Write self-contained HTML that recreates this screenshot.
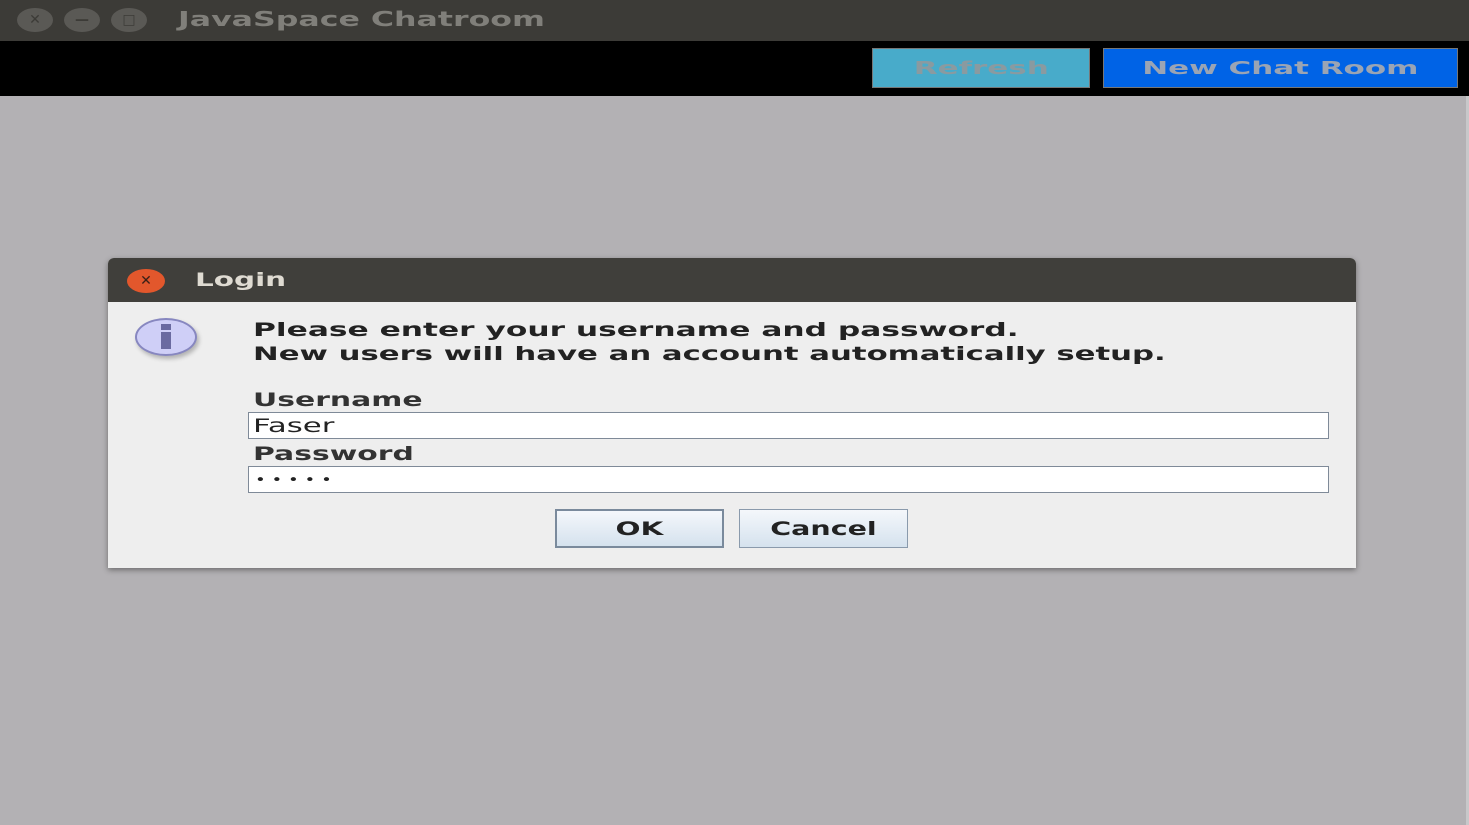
<!DOCTYPE html>
<html><head><style>
body{margin:0;width:1469px;height:825px;overflow:hidden;background:#b3b1b4;font-family:"DejaVu Sans","Liberation Sans",sans-serif;font-weight:bold;position:relative}
.a{position:absolute}
.s{display:inline-block;transform:scaleX(1.62);transform-origin:left center;white-space:nowrap}
.c{transform-origin:center center}
.circ{position:absolute;top:8px;width:36px;height:24px;border-radius:50%;background:#5a5955;color:#3c3b37;font-size:14px;text-align:center;line-height:24px}
.btn{position:absolute;box-sizing:border-box;text-align:center}
.field{position:absolute;left:248px;width:1081px;height:27px;background:#fff;border:1px solid #7f8a98;box-sizing:border-box;font-weight:normal;font-size:19px;line-height:27px;padding-left:4px;color:#222}
</style></head><body>
<div class="a" style="left:0;top:0;width:1469px;height:41px;background:#3c3b37"></div>
<div class="circ" style="left:17px">✕</div>
<div class="circ" style="left:64px">—</div>
<div class="circ" style="left:111px">□</div>
<div class="a" style="left:178px;top:7px;font-size:20px;color:#807f7a"><span class="s" style="transform:scaleX(1.58)">JavaSpace Chatroom</span></div>
<div class="a" style="left:0;top:41px;width:1469px;height:55px;background:#000"></div>
<div class="btn" style="left:872px;top:48px;width:218px;height:40px;background:#48abca;border:1px solid #777;color:#8a9aa0;font-size:18px;line-height:40px"><span class="s c" style="transform:scaleX(1.72)">Refresh</span></div>
<div class="btn" style="left:1103px;top:48px;width:355px;height:40px;background:#0063e6;border:1px solid #777;color:#9aa4b4;font-size:18px;line-height:40px"><span class="s c" style="transform:scaleX(1.72)">New Chat Room</span></div>
<div class="a" style="left:1466px;top:96px;width:3px;height:729px;background:#c8c8ca"></div>

<div class="a" style="left:108px;top:258px;width:1248px;height:310px;background:#eeeeee;box-shadow:0 2px 6px rgba(0,0,0,.4);border-radius:6px 6px 0 0"></div>
<div class="a" style="left:108px;top:258px;width:1248px;height:44px;background:#403f3b;border-radius:6px 6px 0 0"></div>
<div class="a" style="left:127px;top:269px;width:38px;height:24px;border-radius:50%;background:#e2572c;color:#3a2017;font-size:14px;text-align:center;line-height:24px">✕</div>
<div class="a" style="left:195px;top:269px;font-size:19px;color:#dfdbd2"><span class="s" style="transform:scaleX(1.55)">Login</span></div>

<div class="a" style="left:135px;top:318px;width:62px;height:38px;border-radius:50%;background:#cfcff7;border:2px solid #8787c0;box-sizing:border-box;box-shadow:2px 3px 4px rgba(0,0,0,.25)"></div>
<div class="a" style="left:161px;top:324px;width:10px;height:6px;background:#6a6aa0"></div>
<div class="a" style="left:161px;top:332px;width:10px;height:17px;background:#6a6aa0"></div>

<div class="a" style="left:253px;top:318px;font-size:19px;line-height:24px;color:#222"><span class="s" style="transform:scaleX(1.645)">Please enter your username and password.</span><br><span class="s" style="transform:scaleX(1.617)">New users will have an account automatically setup.</span></div>
<div class="a" style="left:253px;top:389px;font-size:19px;color:#333"><span class="s" style="transform:scaleX(1.57)">Username</span></div>
<div class="field" style="top:412px"><span class="s">Faser</span></div>
<div class="a" style="left:253px;top:443px;font-size:19px;color:#333"><span class="s" style="transform:scaleX(1.57)">Password</span></div>
<div class="field" style="top:466px;font-size:13px;padding-left:6px"><span class="s" style="transform:scaleX(1.4)">• • • • •</span></div>

<div class="btn" style="left:555px;top:509px;width:169px;height:39px;border:2px solid #7a8a9c;background:linear-gradient(#f4f7fb,#d5e2ee);font-size:19px;line-height:37px;color:#222"><span class="s c" style="transform:scaleX(1.55)">OK</span></div>
<div class="btn" style="left:739px;top:509px;width:169px;height:39px;border:1px solid #8a9aac;background:linear-gradient(#f4f7fb,#d5e2ee);font-size:19px;line-height:39px;color:#222"><span class="s c" style="transform:scaleX(1.5)">Cancel</span></div>
</body></html>
